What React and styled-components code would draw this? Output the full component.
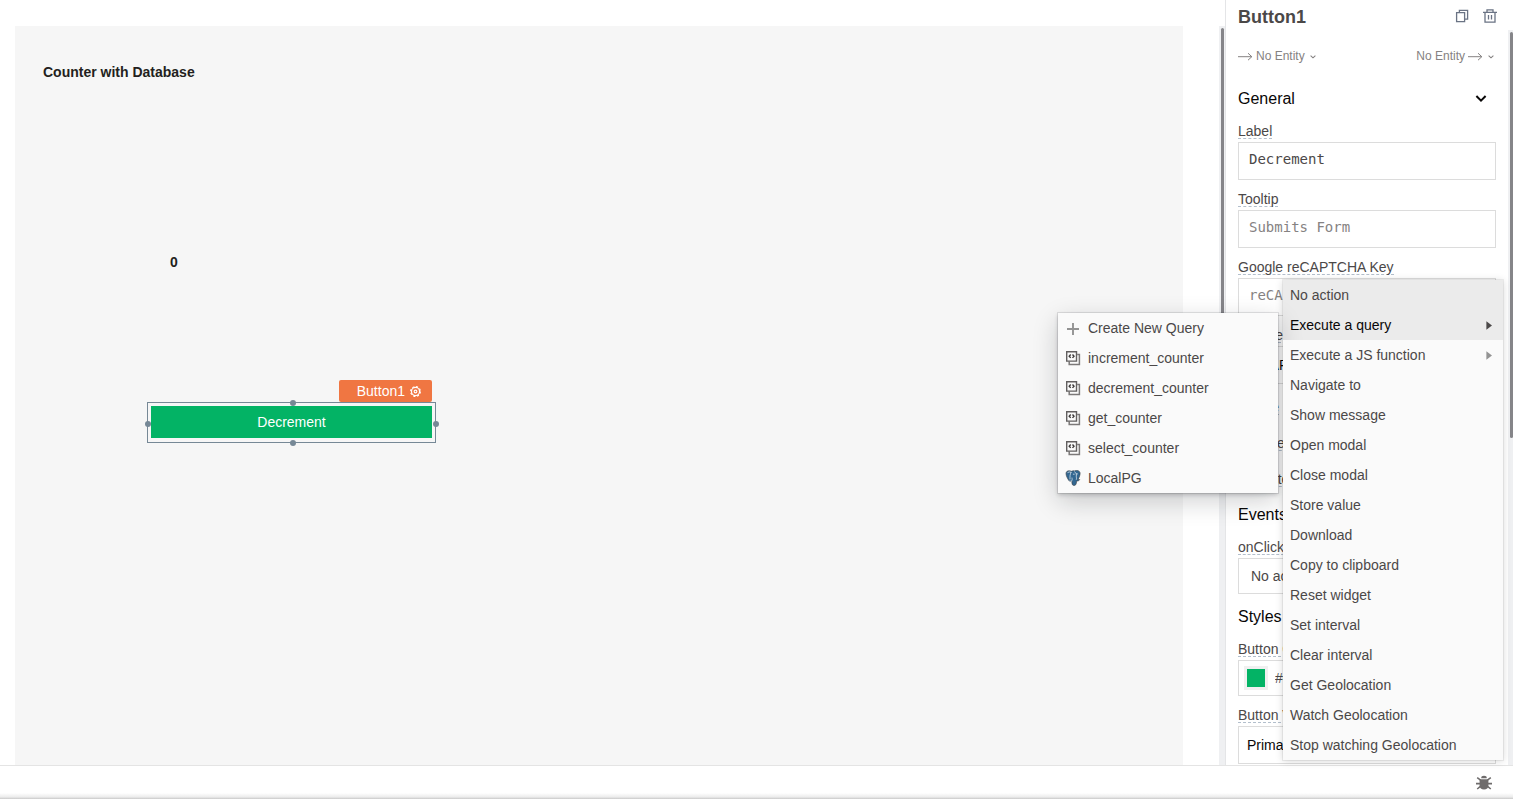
import React from "react";
import styled, { createGlobalStyle } from "styled-components";

const GlobalStyle = createGlobalStyle`
  *, *::before, *::after { box-sizing: border-box; }
  body { margin: 0; background: #fff; font-family: "Liberation Sans", Arial, sans-serif; font-size: 14px; color: #4b4848; }
  button, input, select { font: inherit; color: inherit; }
  h1, h2, p, ul { margin: 0; padding: 0; }
  svg { display: block; flex: none; }
`;

const Page = styled.div`
  height: 100vh;
  display: flex;
  flex-direction: column;
`;

const Workspace = styled.div`
  flex: 1;
  min-height: 0;
  display: flex;
`;

const CanvasPane = styled.main`
  flex: 1;
  min-width: 0;
  display: flex;
  padding: 26px 0 0 15px;
`;

const Canvas = styled.div`
  flex: 1;
  position: relative;
  margin-right: 36px;
  background: #f6f6f6;
`;

const ScrollTrack = styled.div`
  width: ${(p) => p.$width};
  flex: none;
  padding: 2px 1px 0 2px;
  background: #eff0f2;
`;

const ScrollThumb = styled.div`
  width: 3px;
  height: ${(p) => p.$length};
  border-radius: 2px;
  background: #858589;
`;

const CanvasText = styled.p`
  position: absolute;
  left: ${(p) => p.$x};
  top: ${(p) => p.$y};
  line-height: 18px;
  font-weight: 700;
  color: #231f20;
`;

const Selection = styled.div`
  position: absolute;
  left: 132px;
  top: 376px;
  width: 289px;
  height: 41px;
  padding: 3px;
  border: 1px solid #768896;
`;

const WidgetButton = styled.button`
  display: block;
  width: 100%;
  height: 32px;
  padding: 0;
  border: 0;
  background: #03b365;
  color: #fff;
`;

const WidgetTag = styled.button`
  position: absolute;
  right: 3px;
  bottom: calc(100% + 1px);
  height: 22px;
  display: flex;
  align-items: center;
  gap: 5px;
  padding: 0 11px 0 18px;
  border: 0;
  border-radius: 2px;
  background: #f07642;
  color: #fff;
`;

const places = {
  top: "left: 50%; top: 0;",
  right: "left: 100%; top: 50%;",
  bottom: "left: 50%; top: 100%;",
  left: "left: 0; top: 50%;",
};

const Handle = styled.span`
  position: absolute;
  ${(p) => places[p.$side]}
  width: 6px;
  height: 6px;
  margin: -3px -2px -2px -3px;
  transform: translate(${(p) => (p.$side === "left" ? "0" : "1px")}, ${(p) => (p.$side === "top" ? "0" : "1px")});
  border-radius: 50%;
  background: #768896;
`;

const Panel = styled.aside`
  position: relative;
  width: 288px;
  flex: none;
  display: flex;
  flex-direction: column;
  border-left: 1px solid #e4e5e7;
  background: #fff;
`;

const PanelHeader = styled.header`
  height: 30px;
  flex: none;
  display: flex;
  align-items: center;
  justify-content: space-between;
  padding: 4px 16px 0 12px;
`;

const PanelTitle = styled.h1`
  font-size: 18px;
  line-height: 22px;
  color: #4b4848;
`;

const HeaderActions = styled.div`
  display: flex;
  gap: 14px;
  padding-bottom: 2px;
`;

const IconButton = styled.button`
  display: flex;
  padding: 0;
  border: 0;
  background: none;
  color: #6a7384;
`;

const PanelScroll = styled.div`
  flex: 1;
  min-height: 0;
  display: flex;
`;

const PanelBody = styled.div`
  flex: 1;
  overflow: hidden;
  padding: 2px 12px 0;
`;

const EntityRow = styled.div`
  height: 48px;
  display: flex;
  align-items: center;
  justify-content: space-between;
`;

const EntityButton = styled.button`
  display: flex;
  align-items: center;
  gap: 3px;
  padding: 0;
  border: 0;
  background: none;
  font-size: 12px;
  line-height: 16px;
  color: #858282;
`;

const SectionTitle = styled.h2`
  height: 36px;
  display: flex;
  align-items: center;
  justify-content: space-between;
  padding: 2px 9px 0 0;
  margin-bottom: 6px;
  font-size: 16px;
  font-weight: 400;
  color: #090707;
`;

const Field = styled.div`
  margin-bottom: ${(p) => (p.$last ? "4px" : "10px")};
`;

const FieldLabel = styled.label`
  display: table;
  padding-top: 2px;
  line-height: 14px;
  border-bottom: 1px dashed #b3bfcc;
  color: #4b4848;
`;

const TextBox = styled.input`
  display: block;
  width: 100%;
  height: 38px;
  margin-top: 3px;
  padding: 0 10px 4px;
  border: 1px solid #dcdcdc;
  outline: 0;
  background: #fff;
  font-family: "DejaVu Sans Mono", monospace;
  &::placeholder { color: #858282; opacity: 1; }
`;

const SelectBox = styled.select`
  display: block;
  width: 100%;
  height: ${(p) => (p.$action ? "36px" : "38px")};
  margin-top: 3px;
  padding: 0 ${(p) => (p.$action ? "12px" : "8px")};
  border: 1px solid #dcdcdc;
  appearance: none;
  background: #fff;
  color: ${(p) => (p.$action ? "#4b4848" : "#090707")};
`;

const ColorBox = styled.div`
  height: 36px;
  display: flex;
  align-items: center;
  gap: 7px;
  margin-top: 3px;
  padding: 0 5px;
  border: 1px solid #dcdcdc;
`;

const Swatch = styled.span`
  width: 24px;
  height: 24px;
  flex: none;
  border: 3px solid #f0f0f0;
  background: #03b365;
`;

const ColorInput = styled.input`
  min-width: 0;
  flex: 1;
  padding: 0;
  border: 0;
  outline: 0;
`;

const ToggleRow = styled.div`
  height: 36px;
  display: flex;
  align-items: center;
  justify-content: space-between;
`;

const ToggleGroup = styled.div`
  margin-top: -6px;
`;

const MenuList = styled.ul`
  position: absolute;
  width: 220px;
  list-style: none;
  background: #fafafa;
`;

const ActionMenu = styled(MenuList)`
  top: 280px;
  right: 10px;
  box-shadow: 0 0 0 1px rgba(0, 0, 0, 0.06), 0 1px 8px rgba(0, 0, 0, 0.16);
`;

const QueryMenu = styled(MenuList)`
  top: 3px;
  right: calc(100% + 5px);
  box-shadow: 0 0 0 1px rgba(16, 22, 26, 0.1), 0 2px 4px rgba(16, 22, 26, 0.2), 0 8px 24px rgba(16, 22, 26, 0.2);
`;

const MenuEntry = styled.li`
  position: relative;
`;

const MenuButton = styled.button`
  width: 100%;
  height: 30px;
  display: flex;
  align-items: center;
  justify-content: space-between;
  padding: 0 11px 0 7px;
  border: 0;
  text-align: left;
  background: ${(p) => (p.$lit ? "#ebebeb" : "#fafafa")};
  color: ${(p) => (p.$open ? "#090707" : "#4b4848")};
`;

const QueryButton = styled(MenuButton)`
  justify-content: flex-start;
  gap: 7px;
`;

const Footer = styled.footer`
  height: 34px;
  flex: none;
  display: flex;
  align-items: center;
  justify-content: flex-end;
  padding-right: 21px;
  border-top: 1px solid #e4e4e4;
  background: linear-gradient(#fff 0 27px, #ececec 31px, #c9c9c9 33px);
`;

const CopyIcon = () => (
  <svg width="14" height="14" viewBox="0 0 14 14" fill="none" stroke="currentColor" strokeWidth="1.3">
    <path d="M1.6 3.6h8v9h-8zM4.4 3.4V1.4h8.2v8.8H9.8" />
  </svg>
);

const TrashIcon = () => (
  <svg width="14" height="14" viewBox="0 0 14 14" fill="none" stroke="currentColor" strokeWidth="1.3">
    <path d="M0 3.4h14M4 3V.8h6V3M2 3.6v9.6h10V3.6M5.5 6v4.6M8.5 6v4.6" />
  </svg>
);

const ArrowIcon = () => (
  <svg width="15" height="10" viewBox="0 0 15 10" fill="none" stroke="currentColor">
    <path d="M0 5.7h14M10 2.2l3.8 3.5L10 9.2" />
  </svg>
);

const SmallChevron = () => (
  <svg width="10" height="12" viewBox="0 0 10 12" fill="none" stroke="currentColor" strokeWidth="1.1">
    <path d="M2.6 5.6L5 7.8l2.4-2.2" />
  </svg>
);

const ChevronIcon = () => (
  <svg width="12" height="10" viewBox="0 1 12 10" fill="none" stroke="#090707" strokeWidth="2">
    <path d="M1.4 3L6 7.6 10.6 3" />
  </svg>
);

const GearIcon = () => (
  <svg width="11" height="11" viewBox="0 0 12 12" fill="none" stroke="#fff">
    <circle cx="6" cy="6" r="4.4" strokeWidth="1.3" />
    <circle cx="6" cy="6" r="5.3" strokeWidth="1.3" strokeDasharray="2.2 1.963" />
    <circle cx="6" cy="6" r="1.5" strokeWidth="1.2" />
  </svg>
);

const CaretIcon = ({ color }) => (
  <svg width="6" height="10" viewBox="0 0 6 10" fill={color}>
    <path d="M.4 1.2L6 5.4.4 9.8z" />
  </svg>
);

const PlusIcon = () => (
  <svg width="16" height="16" viewBox="0 0 16 16" fill="none" stroke="#939393" strokeWidth="1.9">
    <path d="M8 3v12M2 9h12" />
  </svg>
);

const QueryIcon = () => (
  <svg width="16" height="16" viewBox="0 0 16 16" fill="none">
    <path d="M4.2 11.6v2.8h10.2V4.6h-2.2" stroke="#7b7878" strokeWidth="1.5" />
    <path d="M1.7 1.7h9.8v9.4H1.7z" stroke="#625f5f" strokeWidth="1.4" />
    <path d="M5.7 4.5L4.2 6.2l1.5 1.7M7.5 4.5L9 6.2 7.5 7.9" stroke="#3f3c3c" strokeWidth="1.4" />
  </svg>
);

const PostgresIcon = () => (
  <svg width="16" height="16" viewBox="0 0 16 16" fill="none">
    <path
      d="M1 3.6C1.1 1.4 2.6.6 4.4.8c.8 0 1.4.2 2 .5C7.300.700 8.600.600 9.600.900 10.800.300 12.400.300 13.600.900c1.500.800 1.800 2.200 1.300 4.100-.4 1.700-1.100 3.200-1.900 4.500l1.700.1c-.5 1-1.700 1.500-3.100 1.500-.1 1.600-.3 2.900-.9 3.700-.7.900-2.600 1-3.300-.1-.5-.8-.5-2.200-.6-3.600-1 .600-2.200.500-3-.700C2.500 8.700 1.100 5.800 1 3.600z"
      fill="#336791"
      stroke="#343a40"
      strokeOpacity="0.65"
      strokeWidth="0.9"
    />
    <path
      d="M6 2.300C4.800 4.500 5 6.500 5 9M6 2.300C5 1.600 3.200 1.700 2.500 2.800M6.900 10.500c.5-.8.200-1.500.1-2.500M9.600 1.800c1.700 1 2 2.600 1.700 4.400-.1 1.100.5 2 .1 3.200M8.300 4.200h.9M11.500 3.900h1M6.700 11.200c-.8.100-1.400 0-1.900-.2"
      stroke="#fff"
      strokeOpacity="0.8"
      strokeWidth="0.8"
      strokeLinecap="round"
    />
  </svg>
);

const BugIcon = () => (
  <svg width="16" height="16" viewBox="0 0 16 16" fill="#6f6c6c">
    <path d="M5.2 3.200a2.800 2.400 0 0 1 5.600 0z" />
    <path d="M3.600 4.200h8.800v6.400c0 2.600-1.800 4-4.400 4s-4.400-1.400-4.400-4z" />
    <path d="M1.200 2.700L4.600 5.200M14.800 2.700L11.400 5.200M0 8.600h4.500M16 8.600h-4.500M1.200 14l3.500-2.800M14.800 14l-3.500-2.800" fill="none" stroke="#6f6c6c" strokeWidth="1.6" />
  </svg>
);

const queries = ["increment_counter", "decrement_counter", "get_counter", "select_counter"];

const laterActions = [
  "Navigate to",
  "Show message",
  "Open modal",
  "Close modal",
  "Store value",
  "Download",
  "Copy to clipboard",
  "Reset widget",
  "Set interval",
  "Clear interval",
  "Get Geolocation",
  "Watch Geolocation",
  "Stop watching Geolocation",
];

const toggles = [
  { id: "visible", label: "Visible", on: true },
  { id: "disabled", label: "Disabled", on: false },
  { id: "animate", label: "Animate Loading", on: true },
];

function QuerySubmenu() {
  return (
    <QueryMenu>
      <MenuEntry>
        <QueryButton><PlusIcon />Create New Query</QueryButton>
      </MenuEntry>
      {queries.map((name) => (
        <MenuEntry key={name}>
          <QueryButton><QueryIcon />{name}</QueryButton>
        </MenuEntry>
      ))}
      <MenuEntry>
        <QueryButton><PostgresIcon />LocalPG</QueryButton>
      </MenuEntry>
    </QueryMenu>
  );
}

function ActionDropdown() {
  return (
    <ActionMenu>
      <MenuEntry><MenuButton $lit>No action</MenuButton></MenuEntry>
      <MenuEntry>
        <MenuButton $lit $open aria-expanded="true">Execute a query<CaretIcon color="#4b4848" /></MenuButton>
        <QuerySubmenu />
      </MenuEntry>
      <MenuEntry>
        <MenuButton>Execute a JS function<CaretIcon color="#939393" /></MenuButton>
      </MenuEntry>
      {laterActions.map((name) => (
        <MenuEntry key={name}><MenuButton>{name}</MenuButton></MenuEntry>
      ))}
    </ActionMenu>
  );
}

function PropertyPanel() {
  return (
    <Panel>
      <PanelHeader>
        <PanelTitle>Button1</PanelTitle>
        <HeaderActions>
          <IconButton aria-label="Copy widget"><CopyIcon /></IconButton>
          <IconButton aria-label="Delete widget"><TrashIcon /></IconButton>
        </HeaderActions>
      </PanelHeader>
      <PanelScroll>
        <PanelBody>
          <EntityRow>
            <EntityButton><ArrowIcon />No Entity<SmallChevron /></EntityButton>
            <EntityButton>No Entity<ArrowIcon /><SmallChevron /></EntityButton>
          </EntityRow>
          <SectionTitle>General<ChevronIcon /></SectionTitle>
          <Field>
            <FieldLabel htmlFor="label">Label</FieldLabel>
            <TextBox id="label" defaultValue="Decrement" />
          </Field>
          <Field>
            <FieldLabel htmlFor="tooltip">Tooltip</FieldLabel>
            <TextBox id="tooltip" placeholder="Submits Form" />
          </Field>
          <Field>
            <FieldLabel htmlFor="key">Google reCAPTCHA Key</FieldLabel>
            <TextBox id="key" placeholder="reCAPTCHA Key" />
          </Field>
          <Field>
            <FieldLabel htmlFor="version">Google reCAPTCHA Version</FieldLabel>
            <SelectBox id="version"><option>reCAPTCHA V3</option></SelectBox>
          </Field>
          <ToggleGroup>
            {toggles.map((t) => (
              <ToggleRow key={t.id}>
                <FieldLabel htmlFor={t.id}>{t.label}</FieldLabel>
                <input id={t.id} type="checkbox" defaultChecked={t.on} />
              </ToggleRow>
            ))}
          </ToggleGroup>
          <SectionTitle>Events</SectionTitle>
          <Field $last>
            <FieldLabel htmlFor="onclick">onClick</FieldLabel>
            <SelectBox id="onclick" $action><option>No action</option></SelectBox>
          </Field>
          <SectionTitle>Styles</SectionTitle>
          <Field>
            <FieldLabel htmlFor="color">Button Color</FieldLabel>
            <ColorBox>
              <Swatch />
              <ColorInput id="color" defaultValue="#03B365" />
            </ColorBox>
          </Field>
          <Field>
            <FieldLabel htmlFor="variant">Button Variant</FieldLabel>
            <SelectBox id="variant"><option>Primary</option></SelectBox>
          </Field>
        </PanelBody>
        <ScrollTrack $width="5px"><ScrollThumb $length="406px" /></ScrollTrack>
      </PanelScroll>
      <ActionDropdown />
    </Panel>
  );
}

export default function App() {
  return (
    <Page>
      <GlobalStyle />
      <Workspace>
        <CanvasPane>
          <Canvas>
            <CanvasText $x="28px" $y="37px">Counter with Database</CanvasText>
            <CanvasText $x="155px" $y="227px">0</CanvasText>
            <Selection>
              <WidgetTag>Button1<GearIcon /></WidgetTag>
              <WidgetButton>Decrement</WidgetButton>
              <Handle $side="top" />
              <Handle $side="right" />
              <Handle $side="bottom" />
              <Handle $side="left" />
            </Selection>
          </Canvas>
          <ScrollTrack $width="6px"><ScrollThumb $length="360px" /></ScrollTrack>
        </CanvasPane>
        <PropertyPanel />
      </Workspace>
      <Footer>
        <IconButton aria-label="Debugger"><BugIcon /></IconButton>
      </Footer>
    </Page>
  );
}
